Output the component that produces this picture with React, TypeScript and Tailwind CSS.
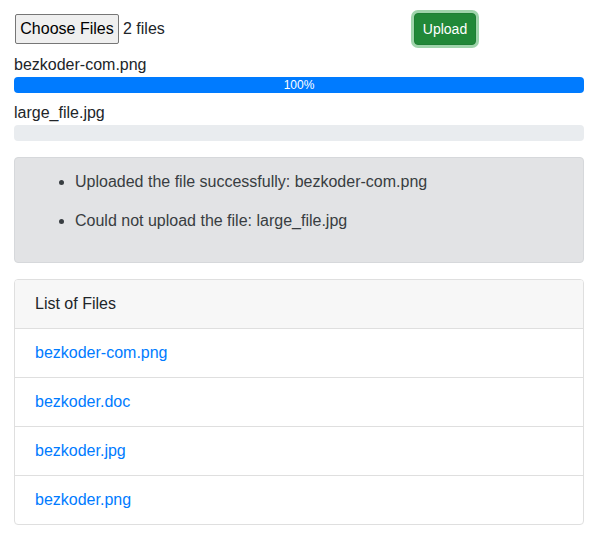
import React from 'react';

const files = ['bezkoder-com.png', 'bezkoder.doc', 'bezkoder.jpg', 'bezkoder.png'];

function Progress({ label, value }: { label: string; value: number }) {
  return (
    <div className="mt-2">
      <div className="h-6 leading-6 text-[16px] text-[#212529]">{label}</div>
      <div className="h-4 w-full overflow-hidden rounded bg-[#e9ecef] text-[12px]">
        {value > 0 && (
          <div
            className="flex h-full items-center justify-center bg-[#007bff] leading-none text-white"
            style={{ width: `${value}%` }}
          >
            {value}%
          </div>
        )}
      </div>
    </div>
  );
}

export default function App() {
  return (
    <div className="min-h-[540px] bg-white pl-[14px] pr-[16px] text-[#212529] [font-family:'Liberation_Sans',Arial,sans-serif]">
      <div className="ml-[1px] flex h-[46px] items-end">
        <div className="flex h-[34px] w-[399px] items-center">
          <button className="h-[30px] w-[104px] rounded-[2px] border border-[#767676] bg-[#efefef] text-[16px] text-black">
            Choose Files
          </button>
          <span className="ml-1 text-[16px]">2 files</span>
        </div>
        <div className="flex h-[34px] items-center">
          <button className="h-[32px] w-[62px] rounded border border-[#1e7e34] bg-[#218838] text-[14px] text-white ring-[3px] ring-[#9fd4ab]">
            Upload
          </button>
        </div>
      </div>

      <div className="-mt-[1px]">
        <Progress label="bezkoder-com.png" value={100} />
        <Progress label="large_file.jpg" value={0} />
      </div>

      <div className="mt-4 rounded border border-[#d6d8db] bg-[#e2e3e5] px-5 pb-[13px] pt-3 text-[16px] text-[#383d41]">
        <ul className="mb-4 list-disc space-y-[15px] pl-10 leading-6">
          <li>Uploaded the file successfully: bezkoder-com.png</li>
          <li>Could not upload the file: large_file.jpg</li>
        </ul>
      </div>

      <div className="mt-4 overflow-hidden rounded border border-[#dfdfdf] text-[16px]">
        <div className="border-b border-[#dfdfdf] bg-[#f7f7f7] px-5 py-3 leading-6">List of Files</div>
        <ul>
          {files.map((f, i) => (
            <li
              key={f}
              className={`px-5 py-3 leading-6 ${i < files.length - 1 ? 'border-b border-[#dfdfdf]' : ''}`}
            >
              <a href="#" className="text-[#007bff]">
                {f}
              </a>
            </li>
          ))}
        </ul>
      </div>
    </div>
  );
}
